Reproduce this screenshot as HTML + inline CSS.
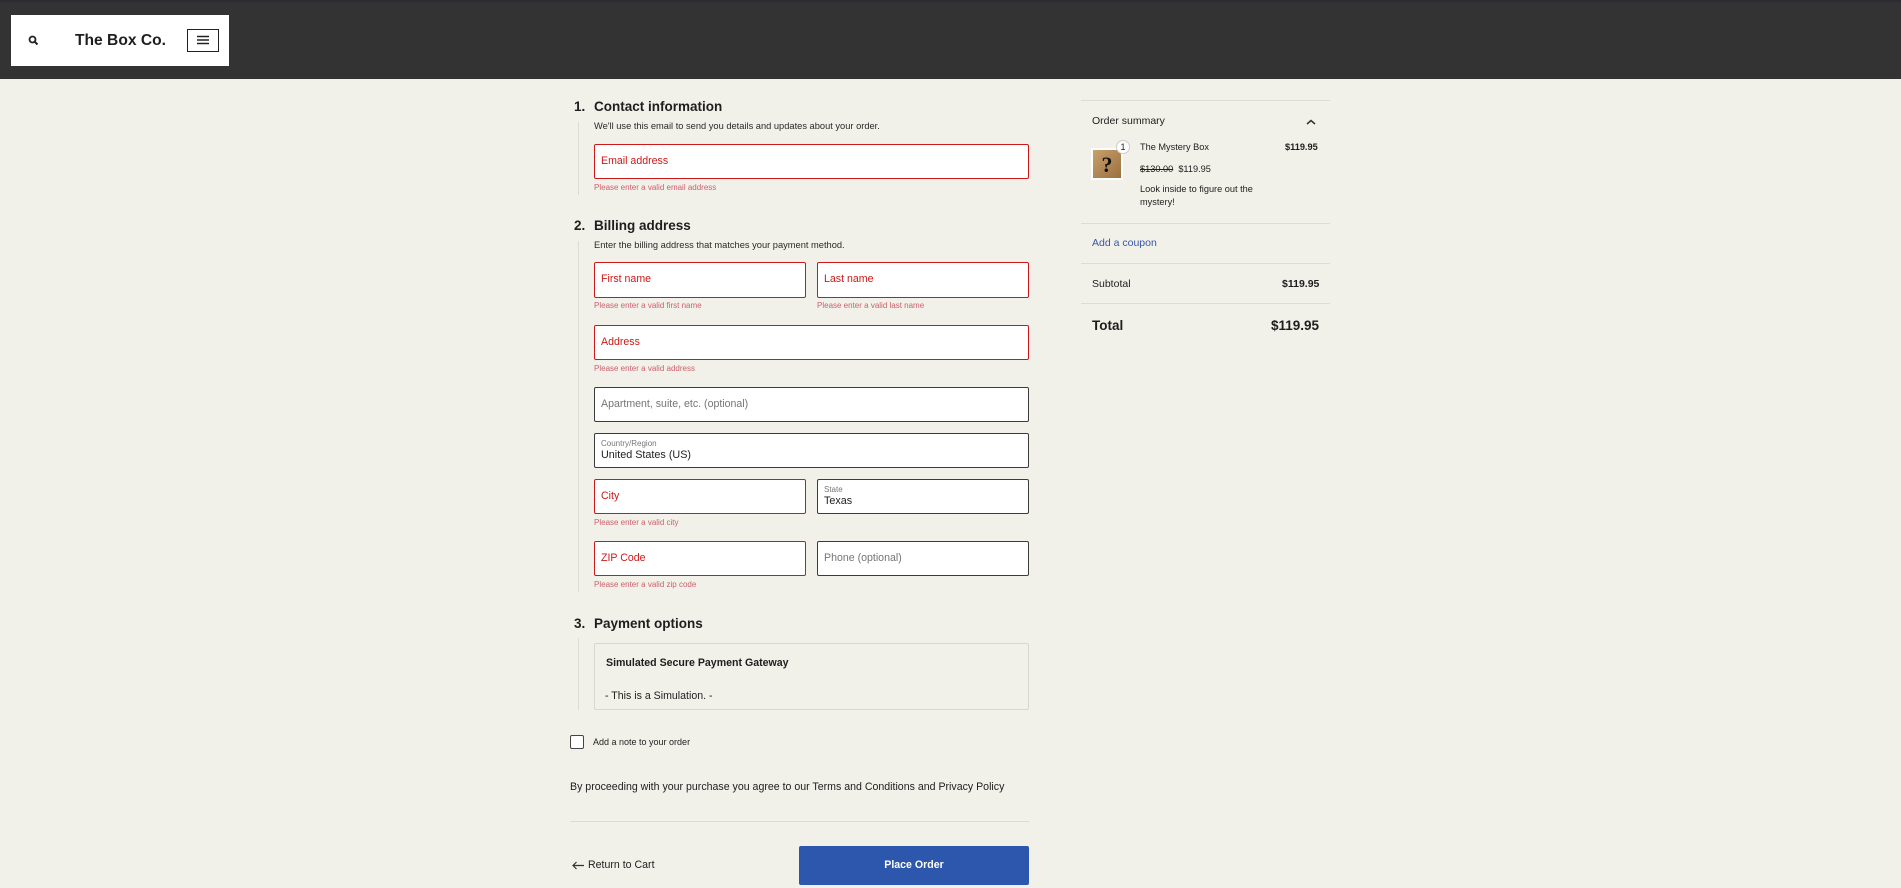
<!DOCTYPE html>
<html><head><meta charset="utf-8"><style>
*{margin:0;padding:0;box-sizing:border-box}
body{width:1901px;height:888px;overflow:hidden;background:#f1f0e9;font-family:"Liberation Sans",Arial,sans-serif;color:#1e1e1e;position:relative}
.a{position:absolute;white-space:nowrap}
.hdr{position:absolute;left:0;top:0;width:1901px;height:79px;background:#333;border-top:2px solid #2a2d31}
.logo{position:absolute;left:11px;top:15px;width:218px;height:51px;background:#fff}
.h{font-size:13.5px;font-weight:bold;color:#1e1e1e}
.sub{font-size:9.3px;color:#2a2a2a}
.in{position:absolute;background:#fff;border:1px solid #3c3c3c;border-radius:2px;font-size:10.6px;color:#757575;padding-left:6px}
.in.r{border:1.5px solid #cc1818;color:#cc1818}
.err{font-size:8px;color:#d0606e}
.vl{position:absolute;left:578px;width:1px;background:#dcdcd4}
.ln{position:absolute;left:1081px;width:249px;height:1px;background:#dcdcd4}
</style></head><body>
<div class="hdr"></div>
<div class="logo"></div>
<svg class="a" style="left:28px;top:35px" width="11" height="11" viewBox="0 0 11 11"><circle cx="4.5" cy="4.5" r="3" fill="none" stroke="#222" stroke-width="1.8"/><line x1="6.8" y1="6.8" x2="9.5" y2="9.5" stroke="#222" stroke-width="2"/></svg>
<div class="a" style="left:75px;top:32px;font-size:15.6px;font-weight:bold;color:#1e1e1e">The Box Co.</div>
<div class="a" style="left:187px;top:29px;width:32px;height:23px;border:1.5px solid #222"></div>
<svg class="a" style="left:197px;top:35px" width="12" height="10"><path d="M0 1.5H12M0 5H12M0 8.5H12" stroke="#222" stroke-width="1.4"/></svg>

<div class="a h" style="left:574px;top:99px">1.</div>
<div class="a h" style="left:594px;top:99px">Contact information</div>
<div class="vl" style="top:122px;height:73px"></div>
<div class="a sub" style="left:594px;top:121px">We'll use this email to send you details and updates about your order.</div>
<div class="in r" style="left:594px;top:144px;width:435px;height:35px;line-height:32px">Email address</div>
<div class="a err" style="left:594px;top:183px">Please enter a valid email address</div>

<div class="a h" style="left:574px;top:218px">2.</div>
<div class="a h" style="left:594px;top:218px">Billing address</div>
<div class="vl" style="top:241px;height:351px"></div>
<div class="a sub" style="left:594px;top:240px">Enter the billing address that matches your payment method.</div>
<div class="in r" style="left:594px;top:262px;width:212px;height:36px;line-height:33px">First name</div>
<div class="in r" style="left:817px;top:262px;width:212px;height:36px;line-height:33px">Last name</div>
<div class="a err" style="left:594px;top:301px">Please enter a valid first name</div>
<div class="a err" style="left:817px;top:301px">Please enter a valid last name</div>
<div class="in r" style="left:594px;top:325px;width:435px;height:35px;line-height:32px">Address</div>
<div class="a err" style="left:594px;top:364px">Please enter a valid address</div>
<div class="in" style="left:594px;top:387px;width:435px;height:35px;line-height:33px">Apartment, suite, etc. (optional)</div>
<div class="in" style="left:594px;top:433px;width:435px;height:35px"><div style="font-size:8px;color:#777;margin-top:5px">Country/Region</div><div style="font-size:10.8px;color:#1e1e1e;margin-top:1px">United States (US)</div></div>
<div class="in r" style="left:594px;top:479px;width:212px;height:35px;line-height:32px">City</div>
<div class="in" style="left:817px;top:479px;width:212px;height:35px"><div style="font-size:8px;color:#777;margin-top:5px">State</div><div style="font-size:10.8px;color:#1e1e1e;margin-top:1px">Texas</div></div>
<div class="a err" style="left:594px;top:518px">Please enter a valid city</div>
<div class="in r" style="left:594px;top:541px;width:212px;height:35px;line-height:32px">ZIP Code</div>
<div class="in" style="left:817px;top:541px;width:212px;height:35px;line-height:33px">Phone (optional)</div>
<div class="a err" style="left:594px;top:580px">Please enter a valid zip code</div>

<div class="a h" style="left:574px;top:616px">3.</div>
<div class="a h" style="left:594px;top:616px">Payment options</div>
<div class="vl" style="top:638px;height:72px"></div>
<div class="a" style="left:594px;top:643px;width:435px;height:67px;border:1px solid #d8d8d0;border-radius:2px"></div>
<div class="a" style="left:606px;top:657px;font-size:10.6px;font-weight:bold;color:#1e1e1e">Simulated Secure Payment Gateway</div>
<div class="a" style="left:605px;top:690px;font-size:10.6px;color:#1e1e1e">- This is a Simulation. -</div>

<div class="a" style="left:570px;top:735px;width:14px;height:14px;border:1px solid #444;border-radius:2px;background:#fff"></div>
<div class="a" style="left:593px;top:737px;font-size:9px;color:#1e1e1e">Add a note to your order</div>
<div class="a" style="left:570px;top:781px;font-size:10.6px;color:#1e1e1e">By proceeding with your purchase you agree to our Terms and Conditions and Privacy Policy</div>
<div class="a" style="left:570px;top:821px;width:459px;height:1px;background:#dcdcd4"></div>
<svg class="a" style="left:572px;top:861px" width="12" height="9"><path d="M1 4.5H12M4.5 1L1 4.5L4.5 8" fill="none" stroke="#333" stroke-width="1.2"/></svg>
<div class="a" style="left:588px;top:859px;font-size:10.6px;color:#1e1e1e">Return to Cart</div>
<div class="a" style="left:799px;top:846px;width:230px;height:39px;background:#2d56ad;border-radius:2px;color:#fff;font-size:10.6px;font-weight:bold;text-align:center;line-height:39px">Place Order</div>

<div class="ln" style="top:100px"></div>
<div class="a" style="left:1092px;top:115px;font-size:10.5px;color:#1e1e1e">Order summary</div>
<svg class="a" style="left:1306px;top:119px" width="10" height="6"><path d="M1 5L5 1.5L9 5" fill="none" stroke="#333" stroke-width="1.5"/></svg>
<div class="a" style="left:1091px;top:148px;width:32px;height:32px;background:#fff"></div>
<div class="a" style="left:1093px;top:150px;width:28px;height:28px;background:linear-gradient(135deg,#c8a06a,#9a7040);font-family:'Liberation Serif',serif;font-weight:bold;font-size:22px;color:#111;text-align:center;line-height:30px">?</div>
<div class="a" style="left:1116px;top:140px;width:14px;height:14px;border-radius:50%;background:#fff;border:1px solid #ccc;font-size:9px;text-align:center;line-height:12px">1</div>
<div class="a" style="left:1140px;top:142px;font-size:9.2px">The Mystery Box</div>
<div class="a" style="left:1285px;top:142px;font-size:9.2px;font-weight:bold">$119.95</div>
<div class="a" style="left:1140px;top:164px;font-size:9.2px"><s>$130.00</s>&nbsp; $119.95</div>
<div class="a" style="left:1140px;top:183px;font-size:9.2px;line-height:13px">Look inside to figure out the<br>mystery!</div>
<div class="ln" style="top:223px"></div>
<div class="a" style="left:1092px;top:237px;font-size:10.5px;color:#3858a8">Add a coupon</div>
<div class="ln" style="top:263px"></div>
<div class="a" style="left:1092px;top:278px;font-size:10.5px">Subtotal</div>
<div class="a" style="left:1282px;top:278px;font-size:10.5px;font-weight:bold">$119.95</div>
<div class="ln" style="top:303px"></div>
<div class="a" style="left:1092px;top:318px;font-size:13.5px;font-weight:bold">Total</div>
<div class="a" style="left:1271px;top:318px;font-size:13.5px;font-weight:bold">$119.95</div>
</body></html>
